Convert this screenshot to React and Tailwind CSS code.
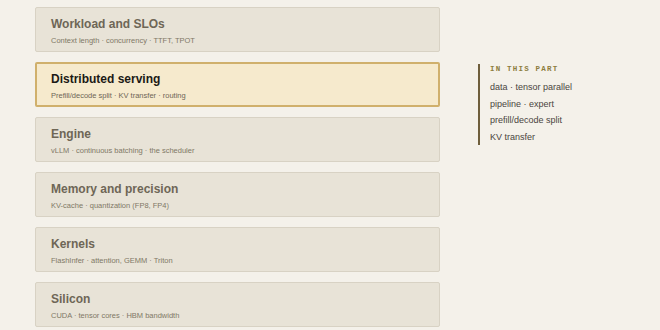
export default function App() {
  const cards = [
    { t: "Workload and SLOs", s: "Context length · concurrency · TTFT, TPOT" },
    { t: "Distributed serving", s: "Prefill/decode split · KV transfer · routing", active: true },
    { t: "Engine", s: "vLLM · continuous batching · the scheduler" },
    { t: "Memory and precision", s: "KV-cache · quantization (FP8, FP4)" },
    { t: "Kernels", s: "FlashInfer · attention, GEMM · Triton" },
    { t: "Silicon", s: "CUDA · tensor cores · HBM bandwidth" },
  ];
  const items = ["data · tensor parallel", "pipeline · expert", "prefill/decode split", "KV transfer"];
  return (
    <div
      className="w-[660px] h-[330px] overflow-hidden bg-[#f4f1ea] flex pl-[35px] pt-[7px]"
      style={{ fontFamily: '"Liberation Sans", Arial, sans-serif' }}
    >
      <div className="w-[405px] flex flex-col gap-[10px] shrink-0">
        {cards.map((c) =>
          c.active ? (
            <div
              key={c.t}
              className="h-[45px] rounded-[2px] border-2 border-[#d0b06c] bg-[#f6eacd] pl-[14px] pt-[8px]"
            >
              <div className="text-[12px] leading-[15px] font-bold text-[#1c1a16]">{c.t}</div>
              <div className="mt-[3.5px] text-[7.5px] leading-[10px] text-[#6e6656]">{c.s}</div>
            </div>
          ) : (
            <div
              key={c.t}
              className="h-[45px] rounded-[2px] border border-[#d8d2c4] bg-[#e8e3d7] pl-[15px] pt-[9px]"
            >
              <div className="text-[12px] leading-[15px] font-bold text-[#6e6656]">{c.t}</div>
              <div className="mt-[3.5px] text-[7.5px] leading-[10px] text-[#807866]">{c.s}</div>
            </div>
          )
        )}
      </div>
      <div className="ml-[38px] mt-[57px] self-start border-l-2 border-[#6e5e3c] pl-[10px]">
        <div
          className="text-[7.5px] leading-[10px] tracking-[1.2px] font-bold text-[#8c7d3e] uppercase"
          style={{ fontFamily: '"Liberation Mono", "DejaVu Sans Mono", monospace' }}
        >
          In this part
        </div>
        <div className="mt-[5px] flex flex-col">
          {items.map((i) => (
            <div key={i} className="text-[9px] leading-[16.5px] text-[#4a4540]">
              {i}
            </div>
          ))}
        </div>
      </div>
    </div>
  );
}
